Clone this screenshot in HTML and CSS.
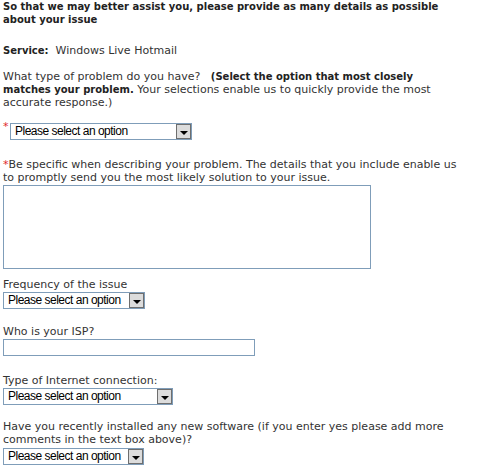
FILE: index.html
```html
<!DOCTYPE html>
<html>
<head>
<meta charset="utf-8">
<link rel="stylesheet" href="styles.css">
</head>
<body>
<form class="form">
  <h1 class="intro">So that we may better assist you, please provide as many details as possible about your issue</h1>
  <p class="service"><b>Service:</b>&nbsp; Windows Live Hotmail</p>
  <p class="question">What type of problem do you have? &nbsp; <b>(Select the option that most closely matches your problem.</b> Your selections enable us to quickly provide the most accurate response.)</p>
  <div class="req-row">
    <span class="star star-sup">*</span>
    <span class="sel sel-main"><select><option>Please select an option</option></select><span class="btn"><span class="tri"></span></span></span>
  </div>
  <p class="describe"><span class="star">*</span>Be specific when describing your problem. The details that you include enable us to promptly send you the most likely solution to your issue.</p>
  <textarea class="details"></textarea>
  <label class="lbl lbl-freq">Frequency of the issue</label>
  <span class="sel sel-freq"><select><option>Please select an option</option></select><span class="btn"><span class="tri"></span></span></span>
  <label class="lbl lbl-isp">Who is your ISP?</label>
  <input class="isp" type="text">
  <label class="lbl lbl-conn">Type of Internet connection:</label>
  <span class="sel sel-conn"><select><option>Please select an option</option></select><span class="btn"><span class="tri"></span></span></span>
  <label class="lbl lbl-soft">Have you recently installed any new&nbsp;software (if you enter yes please add more comments in the text box above)?</label>
  <span class="sel sel-soft"><select><option>Please select an option</option></select><span class="btn"><span class="tri"></span></span></span>
</form>
</body>
</html>
```

FILE: styles.css
```css
html, body {
  margin: 0;
  padding: 0;
  background: #ffffff;
}
body {
  font-family: "DejaVu Sans", Verdana, sans-serif;
  font-size: 11px;
  line-height: 13px;
  color: #333333;
}
.form {
  display: flex;
  flex-direction: column;
  align-items: flex-start;
  width: 455px;
  padding: 0 3px;
}
.intro {
  margin: 0;
  font-size: 10px;
  line-height: 13px;
  font-weight: bold;
  color: #222222;
}
.service {
  margin: 18px 0 0;
}
.service b, .question b {
  font-size: 10px;
  color: #222222;
}
.question {
  margin: 13px 0 0;
}
.req-row {
  display: flex;
  align-items: flex-start;
  margin-top: 14px;
}
.star {
  color: #e0282c;
}
.star-sup {
  width: 7px;
  line-height: 10px;
  margin-top: -1px;
}
.describe {
  margin: 18px 0 0;
}
.details {
  margin: 1px 0 0;
  width: 368px;
  height: 84px;
  box-sizing: border-box;
  border: 1px solid #7f9db9;
  resize: none;
  padding: 0;
}
.lbl {
  display: block;
}
.lbl-freq { margin-top: 9px; }
.lbl-isp { margin-top: 16px; }
.lbl-conn { margin-top: 18px; }
.lbl-soft { margin-top: 15px; }

.sel {
  position: relative;
  display: block;
  height: 17px;
  margin-top: 1px;
}
.sel select {
  -webkit-appearance: none;
  appearance: none;
  display: block;
  width: 100%;
  height: 17px;
  box-sizing: border-box;
  margin: 0;
  border: 1px solid #7f9db9;
  border-radius: 0;
  background: #ffffff;
  color: #000000;
  font-family: "Liberation Sans", Arial, sans-serif;
  font-size: 12px;
  letter-spacing: -0.5px;
  line-height: 15px;
  padding: 0 0 0 4px;
}
.sel .btn {
  position: absolute;
  top: 1px;
  right: 1px;
  width: 15px;
  height: 15px;
  box-sizing: border-box;
  border: 1px solid #6e6e6e;
  background: #dcdcdc;
  pointer-events: none;
}
.sel .tri {
  position: absolute;
  left: 3px;
  bottom: 3px;
  width: 0;
  height: 0;
  border-left: 4px solid transparent;
  border-right: 4px solid transparent;
  border-top: 4px solid #000000;
}
.sel-main { width: 182px; margin-top: 0; }
.sel-freq { width: 142px; }
.sel-conn { width: 170px; }
.sel-soft { width: 141px; margin-top: 2px; }
.isp {
  display: block;
  width: 252px;
  height: 17px;
  box-sizing: border-box;
  margin: 1px 0 0;
  border: 1px solid #7f9db9;
  padding: 0;
}
```
